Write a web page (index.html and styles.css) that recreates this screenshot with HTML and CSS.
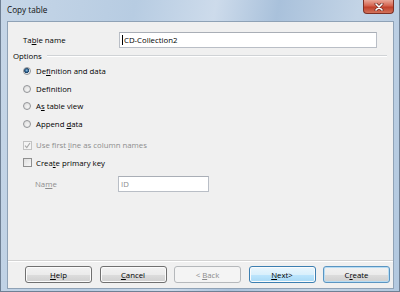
FILE: index.html
```html
<!DOCTYPE html>
<html lang="en">
<head>
    <meta charset="UTF-8">
    <title>Copy table</title>
    <link rel="stylesheet" href="styles.css">
</head>
<body>
    <div class="window">
        <div class="titlebar">
            <span class="title">Copy table</span>
            <span class="close">
                <svg width="10" height="8" viewBox="0 0 10 8">
                    <path d="M2 1 L8 7 M8 1 L2 7" stroke="#6b2a22" stroke-width="3" stroke-linecap="round"/>
                    <path d="M2 1 L8 7 M8 1 L2 7" stroke="#fff" stroke-width="1.6" stroke-linecap="round"/>
                </svg>
            </span>
        </div>

        <div class="client">
            <div class="content">
                <div class="field-row top-row">
                    <span class="field-label">Ta<u>b</u>le name</span>
                    <div class="text-box wide"><span class="caret"></span><span>CD-Collection2</span></div>
                </div>

                <div class="group-title">
                    <span>Options</span>
                    <span class="rule"></span>
                </div>

                <div class="option"><span class="radio checked"></span><span>De<u>f</u>inition and data</span></div>
                <div class="option"><span class="radio"></span><span>Def<u>i</u>nition</span></div>
                <div class="option"><span class="radio"></span><span>A<u>s</u> table view</span></div>
                <div class="option"><span class="radio"></span><span>Append <u>d</u>ata</span></div>

                <div class="option disabled first-check">
                    <span class="check">
                        <svg width="7" height="7" viewBox="0 0 7 7"><path d="M1 3.6 L2.8 5.6 L6 1" fill="none" stroke="#a8a8a8" stroke-width="1.1"/></svg>
                    </span>
                    <span>Use first <u>l</u>ine as column names</span>
                </div>
                <div class="option"><span class="check"></span><span>Crea<u>t</u>e primary key</span></div>

                <div class="field-row key-row disabled">
                    <span class="field-label short">Na<u>m</u>e</span>
                    <div class="text-box narrow">ID</div>
                </div>
            </div>

            <div class="footer">
                <button class="btn"><u>H</u>elp</button>
                <button class="btn"><u>C</u>ancel</button>
                <button class="btn off">&lt; <u>B</u>ack</button>
                <button class="btn default"><u>N</u>ext&gt;</button>
                <button class="btn focus">C<u>r</u>eate</button>
            </div>
        </div>
    </div>
</body>
</html>
```

FILE: styles.css
```css
body {
    margin: 0;
    font-family: "Open Sans", "Noto Sans", sans-serif;
    font-size: 7.8px;
    color: #000;
}
u {
    text-decoration-thickness: 1px;
    text-underline-offset: 1px;
}
.window {
    width: 400px;
    height: 292px;
    box-sizing: border-box;
    display: flex;
    flex-direction: column;
    padding: 0 5px 2px 6px;
    border: 1px solid #6f8094;
    border-top: none;
    background: linear-gradient(100deg, #c6d6e7 0%, #b7cce2 30%, #cddbeb 48%, #a9c1db 62%, #c3d4e6 80%, #b2c8df 100%);
}
.titlebar {
    height: 21px;
    display: flex;
    justify-content: space-between;
    align-items: flex-start;
}
.title {
    padding: 4px 0 0 0;
    font-size: 8.2px;
    color: #111;
}
.close {
    width: 31px;
    height: 14px;
    box-sizing: border-box;
    display: flex;
    align-items: center;
    justify-content: center;
    border: 1px solid #7d3126;
    border-top: none;
    border-radius: 0 0 4px 4px;
    background: linear-gradient(#e9a899, #d4634e 45%, #c0402a 55%, #d2735c);
}
.client {
    flex: 1;
    display: flex;
    flex-direction: column;
    background: #f0f0f0;
    border: 1px solid #8fa2b6;
}
.content {
    flex: 1;
}
.field-row {
    display: flex;
    align-items: center;
}
.top-row {
    margin-top: 10px;
}
.field-label {
    width: 96px;
    padding-left: 15px;
}
.field-label.short {
    width: 83px;
    padding-left: 27px;
}
.text-box {
    height: 16px;
    box-sizing: border-box;
    display: flex;
    align-items: center;
    padding-left: 2px;
    background: #fff;
    border: 1px solid #b9bec6;
    border-top-color: #a9aeb6;
}
.text-box.wide {
    width: 258px;
}
.text-box.narrow {
    width: 91px;
}
.caret {
    width: 1px;
    height: 10px;
    background: #000;
    margin-right: 1px;
}
.group-title {
    height: 12px;
    margin-top: 2px;
    display: flex;
    align-items: center;
    padding: 0 6px 0 5px;
}
.rule {
    flex: 1;
    height: 0;
    margin-left: 5px;
    border-top: 1px solid #d0d3d6;
    border-bottom: 1px solid #fff;
}
.option {
    height: 17.7px;
    display: flex;
    align-items: center;
    padding-left: 15px;
}
.first-check {
    margin-top: 3.5px;
}
.radio {
    width: 8px;
    height: 8px;
    box-sizing: border-box;
    margin-right: 5px;
    border-radius: 50%;
    border: 1px solid #939598;
    background: radial-gradient(circle at 60% 65%, #f4f4f4, #d8d8d8);
}
.radio.checked {
    background: radial-gradient(circle at 45% 40%, #8fc0e4 0, #2c5e8a 1.6px, #173c62 2.4px, #e9eef2 2.8px, #d6dbe0 100%);
}
.check {
    width: 9px;
    height: 9px;
    box-sizing: border-box;
    margin-right: 4px;
    display: flex;
    align-items: center;
    justify-content: center;
    border: 1px solid #8f8f8f;
    background: linear-gradient(135deg, #dedede, #f7f7f7);
}
.disabled {
    color: #8d8d8d;
}
.disabled .check {
    border-color: #c2c2c2;
    background: #f4f4f4;
}
.key-row {
    margin-top: 4px;
}
.footer {
    height: 28px;
    box-sizing: border-box;
    display: flex;
    gap: 7.5px;
    padding: 5px 0 0 17px;
    border-top: 1px solid #d2d2d2;
    box-shadow: inset 0 1px #fff;
}
.btn {
    width: 67px;
    height: 17px;
    padding: 0;
    font-family: inherit;
    font-size: 7.8px;
    color: #000;
    border: 1px solid #707070;
    border-radius: 3px;
    background: linear-gradient(#f2f2f2, #ebebeb 50%, #dddddd 50%, #cfcfcf);
    box-shadow: inset 0 0 0 1px #fbfbfb;
}
.btn.off {
    color: #8b8b8b;
    border-color: #b5b8bb;
    background: #f4f4f4;
    box-shadow: none;
}
.btn.default {
    border-color: #3c7fb1;
    background: linear-gradient(#eaf6fd, #d9f0fc 50%, #bee6fd 50%, #a7d9f5);
}
.btn.focus {
    border-color: #5a95c2;
    box-shadow: inset 0 0 0 1px #b7dcf3;
}
```
